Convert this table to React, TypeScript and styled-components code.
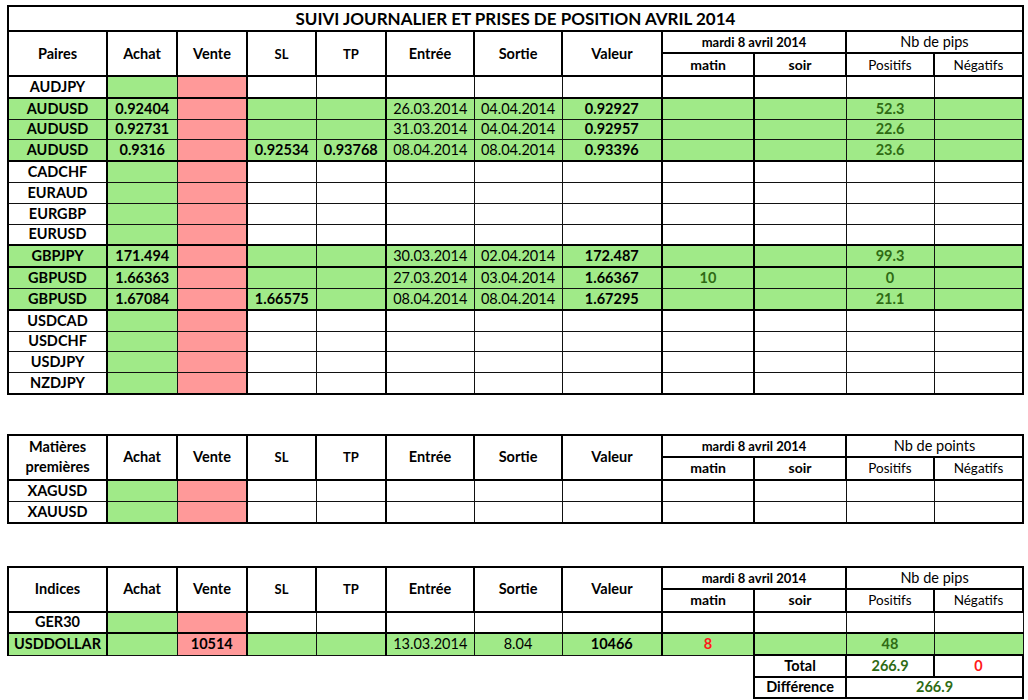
import React from "react";
import styled, { createGlobalStyle, css } from "styled-components";

const GREEN = "#a0ea88";
const PINK = "#ff9999";
const DARKGREEN = "#2f6b14";
const RED = "#ff1a1a";

const Global = createGlobalStyle`
  html, body { margin: 0; padding: 0; background: #fff; }
  body { font-family: Lato, "Open Sans", "Liberation Sans", sans-serif; color: #000; }
`;

const Page = styled.div`
  display: flex;
  flex-direction: column;
  padding: 5px 0 0 7px;
  width: 1015px;
`;

const Sheet = styled.table<{ $gap?: number }>`
  border-collapse: collapse;
  table-layout: fixed;
  width: 1015px;
  margin-top: ${(p) => p.$gap ?? 0}px;
`;

const TitleCell = styled.td`
  border: 2px solid #000;
  height: 22px;
  padding: 1px 0 0;
  text-align: center;
  font-weight: 700;
  font-size: 17px;
  line-height: 20px;
`;

const Th = styled.th<{ $size?: number; $weight?: number; $h?: number }>`
  border: 2px solid #000;
  padding: 0;
  height: ${(p) => p.$h ?? 19}px;
  text-align: center;
  vertical-align: middle;
  font-size: ${(p) => p.$size ?? 14.5}px;
  font-weight: ${(p) => p.$weight ?? 700};
  line-height: 16px;
  background: #fff;
`;

const Tr = styled.tr<{ $thick?: boolean }>`
  ${(p) =>
    p.$thick &&
    css`
      & > td {
        border-top: 2px solid #000;
      }
    `}
`;

const Td = styled.td<{
  $bg?: string;
  $bold?: boolean;
  $color?: string;
  $left?: number;
}>`
  height: 19.8px;
  padding: 0 2px;
  text-align: center;
  vertical-align: middle;
  white-space: nowrap;
  overflow: hidden;
  font-size: 14.5px;
  line-height: 16px;
  font-weight: ${(p) => (p.$bold ? 700 : 400)};
  color: ${(p) => p.$color ?? "#000"};
  background: ${(p) => p.$bg ?? "#fff"};
  border: 1px solid #111;
  ${(p) =>
    p.$left === 2 &&
    css`
      border-left: 2px solid #000;
    `}
`;

const SummaryTd = styled.td<{ $color?: string }>`
  border: 2px solid #000;
  height: 19.5px;
  padding: 0;
  text-align: center;
  vertical-align: middle;
  font-size: 14.5px;
  font-weight: 700;
  line-height: 16px;
  color: ${(p) => p.$color ?? "#000"};
  background: #fff;
`;

const Blank = styled.td`
  border: none;
  padding: 0;
`;

const widths = [99, 70, 70, 69, 70, 88, 88, 100, 92, 92, 88, 89];
const leftW = [2, 2, 1, 2, 1, 2, 1, 1, 2, 2, 1, 1];

type Row = {
  name: string;
  active?: boolean;
  thick?: boolean;
  v?: string[]; // achat, vente, sl, tp, entree, sortie, valeur, matin, soir, pos, neg
  matinRed?: boolean;
};

const bold = [true, true, true, true, false, false, true, true, true, true, true];

function DataRow({ r }: { r: Row }) {
  const vals = r.v ?? [];
  return (
    <Tr $thick={r.thick}>
      <Td $bold $bg={r.active ? GREEN : "#fff"} $left={2}>
        {r.name}
      </Td>
      {Array.from({ length: 11 }).map((_, i) => {
        const col = i + 1;
        const bg = col === 1 ? GREEN : col === 2 ? PINK : r.active ? GREEN : "#fff";
        let color: string | undefined;
        if (col === 8) color = r.matinRed ? RED : DARKGREEN;
        if (col === 10) color = DARKGREEN;
        return (
          <Td key={col} $bg={bg} $bold={bold[i]} $color={color} $left={leftW[col]}>
            {vals[i] ?? ""}
          </Td>
        );
      })}
    </Tr>
  );
}

function Cols() {
  return (
    <colgroup>
      {widths.map((w, i) => (
        <col key={i} style={{ width: w }} />
      ))}
    </colgroup>
  );
}

function Head({ first, group, h1 = 20, h2 = 20 }: { first: React.ReactNode; group: string; h1?: number; h2?: number }) {
  return (
    <>
      <tr>
        <Th rowSpan={2}>{first}</Th>
        <Th rowSpan={2}>Achat</Th>
        <Th rowSpan={2}>Vente</Th>
        <Th rowSpan={2} $size={13}>SL</Th>
        <Th rowSpan={2} $size={13}>TP</Th>
        <Th rowSpan={2}>Entrée</Th>
        <Th rowSpan={2}>Sortie</Th>
        <Th rowSpan={2}>Valeur</Th>
        <Th colSpan={2} $size={13} $h={h1}>mardi 8 avril 2014</Th>
        <Th colSpan={2} $weight={400} $h={h1}>{group}</Th>
      </tr>
      <tr>
        <Th $size={14} $h={h2}>matin</Th>
        <Th $size={14} $h={h2}>soir</Th>
        <Th $size={13.5} $weight={400} $h={h2}>Positifs</Th>
        <Th $size={13.5} $weight={400} $h={h2}>Négatifs</Th>
      </tr>
    </>
  );
}

const rows1: Row[] = [
  { name: "AUDJPY" },
  { name: "AUDUSD", active: true, thick: true, v: ["0.92404", "", "", "", "26.03.2014", "04.04.2014", "0.92927", "", "", "52.3", ""] },
  { name: "AUDUSD", active: true, v: ["0.92731", "", "", "", "31.03.2014", "04.04.2014", "0.92957", "", "", "22.6", ""] },
  { name: "AUDUSD", active: true, v: ["0.9316", "", "0.92534", "0.93768", "08.04.2014", "08.04.2014", "0.93396", "", "", "23.6", ""] },
  { name: "CADCHF", thick: true },
  { name: "EURAUD" },
  { name: "EURGBP" },
  { name: "EURUSD" },
  { name: "GBPJPY", active: true, thick: true, v: ["171.494", "", "", "", "30.03.2014", "02.04.2014", "172.487", "", "", "99.3", ""] },
  { name: "GBPUSD", active: true, thick: true, v: ["1.66363", "", "", "", "27.03.2014", "03.04.2014", "1.66367", "10", "", "0", ""] },
  { name: "GBPUSD", active: true, v: ["1.67084", "", "1.66575", "", "08.04.2014", "08.04.2014", "1.67295", "", "", "21.1", ""] },
  { name: "USDCAD", thick: true },
  { name: "USDCHF" },
  { name: "USDJPY" },
  { name: "NZDJPY" },
];

const rows2: Row[] = [{ name: "XAGUSD" }, { name: "XAUUSD" }];

const rows3: Row[] = [
  { name: "GER30" },
  { name: "USDDOLLAR", active: true, thick: true, matinRed: true, v: ["", "10514", "", "", "13.03.2014", "8.04", "10466", "8", "", "48", ""] },
];

const Outer = styled.tbody`
  & > tr:last-child > td {
    border-bottom: 2px solid #000;
  }
  & > tr > td:last-child {
    border-right: 2px solid #000;
  }
`;

const Stacked = styled.span`
  display: block;
  line-height: 20px;
`;

export default function App() {
  return (
    <>
      <Global />
      <Page>
        <Sheet>
          <Cols />
          <thead>
            <tr>
              <TitleCell colSpan={12}>SUIVI JOURNALIER ET PRISES DE POSITION AVRIL 2014</TitleCell>
            </tr>
            <Head first="Paires" group="Nb de pips" h1={20} h2={21} />
          </thead>
          <Outer>
            {rows1.map((r, i) => (
              <DataRow key={i} r={r} />
            ))}
          </Outer>
        </Sheet>

        <Sheet $gap={39}>
          <Cols />
          <thead>
            <Head
              first={
                <>
                  <Stacked>Matières</Stacked>
                  <Stacked>premières</Stacked>
                </>
              }
              group="Nb de points"
              h1={20}
              h2={21}
            />
          </thead>
          <Outer>
            {rows2.map((r, i) => (
              <DataRow key={i} r={r} />
            ))}
          </Outer>
        </Sheet>

        <Sheet $gap={42}>
          <Cols />
          <thead>
            <Head first="Indices" group="Nb de pips" h1={20} h2={21} />
          </thead>
          <tbody>
            {rows3.map((r, i) => (
              <DataRow key={i} r={r} />
            ))}
            <tr>
              <Blank colSpan={9} />
              <SummaryTd>Total</SummaryTd>
              <SummaryTd $color={DARKGREEN}>266.9</SummaryTd>
              <SummaryTd $color={RED}>0</SummaryTd>
            </tr>
            <tr>
              <Blank colSpan={9} />
              <SummaryTd>Différence</SummaryTd>
              <SummaryTd colSpan={2} $color={DARKGREEN}>
                266.9
              </SummaryTd>
            </tr>
          </tbody>
        </Sheet>
      </Page>
    </>
  );
}
